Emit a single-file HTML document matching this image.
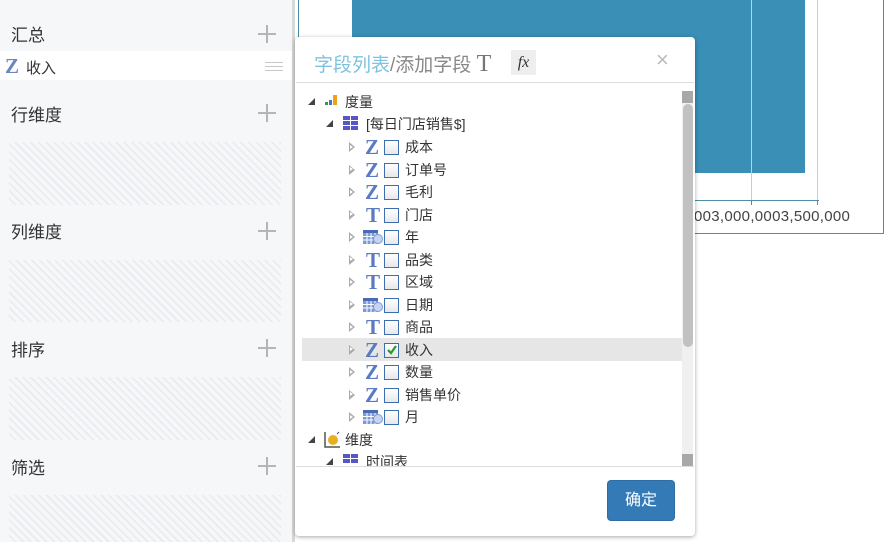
<!DOCTYPE html>
<html><head><meta charset="utf-8"><style>
*{margin:0;padding:0;box-sizing:border-box}
body{width:894px;height:542px;overflow:hidden;background:#fff;font-family:"Liberation Sans","Noto Sans CJK SC",sans-serif;position:relative;color:#333}
.a{position:absolute}
.left{left:0;top:0;width:292px;height:542px;background:#f6f7f9}
.h{font-size:17px;color:#333;left:11px}
.plus{left:258px;width:18px;height:18px}
.plus:before{content:"";position:absolute;left:0;top:8px;width:18px;height:2px;background:#b5b5b5}
.plus:after{content:"";position:absolute;left:8px;top:0;width:2px;height:18px;background:#b5b5b5}
.hatch{left:9px;width:272px;background:repeating-linear-gradient(45deg,#f6f7f9 0 4px,#e9eaee 4px 5.5px)}
.row{position:absolute;height:22px;font-size:14px;line-height:22px;white-space:nowrap}
.tri{position:absolute;top:6px;width:0;height:0;border-left:6px solid #aaa;border-top:5px solid transparent;border-bottom:5px solid transparent}
.tri:after{content:"";position:absolute;left:-5px;top:-2.5px;border-left:3px solid #fff;border-top:2.5px solid transparent;border-bottom:2.5px solid transparent}
.dtri{position:absolute;top:7px;width:0;height:0;border-right:7px solid #444;border-top:7px solid transparent}
.z{position:absolute;font-family:"Liberation Serif",serif;font-weight:bold;font-size:21px;color:#5a7ac4;line-height:22px;top:0}
.cb{position:absolute;top:4px;width:15px;height:15px;border:1.5px solid #3d6fb0;background:linear-gradient(#fff,#e8e8e8)}
</style></head><body>
<div class="a left"></div>
<div class="a h" style="top:21px">汇总</div><div class="a plus" style="top:25px"></div>
<div class="a" style="left:0;top:51px;width:292px;height:29px;background:#fff"></div>
<div class="a" style="left:5px;top:54px;font-family:'Liberation Serif',serif;font-weight:bold;font-size:21px;color:#6b86c0">Z</div>
<div class="a" style="left:26px;top:57px;font-size:15px">收入</div>
<div class="a" style="left:265px;top:62px;width:18px;height:1px;background:#c8c8c8;box-shadow:0 4px 0 #c8c8c8,0 8px 0 #c8c8c8"></div>
<div class="a h" style="top:101px">行维度</div><div class="a plus" style="top:104px"></div>
<div class="a hatch" style="top:142px;height:63px"></div>
<div class="a h" style="top:218px">列维度</div><div class="a plus" style="top:222px"></div>
<div class="a hatch" style="top:260px;height:62px"></div>
<div class="a h" style="top:336px">排序</div><div class="a plus" style="top:339px"></div>
<div class="a hatch" style="top:377px;height:63px"></div>
<div class="a h" style="top:454px">筛选</div><div class="a plus" style="top:457px"></div>
<div class="a hatch" style="top:495px;height:47px"></div>
<div class="a" style="left:292px;top:0;width:3px;height:542px;background:#d8d8d8"></div>

<!-- chart -->
<div class="a" style="left:298px;top:-2px;width:586px;height:236px;border:1px solid #4a90a4"></div>
<div class="a" style="left:352px;top:0;width:453px;height:173px;background:#3a8fb7"></div>
<div class="a" style="left:751px;top:0;width:1px;height:200px;background:#ccc"></div>
<div class="a" style="left:817px;top:0;width:1px;height:200px;background:#ccc"></div>
<div class="a" style="left:690px;top:200px;width:129px;height:1px;background:#4a90a4"></div>
<div class="a" style="left:751px;top:200px;width:1px;height:5px;background:#4a90a4"></div>
<div class="a" style="left:817px;top:200px;width:1px;height:5px;background:#4a90a4"></div>
<div class="a" style="left:694px;top:208px;font-size:15px;letter-spacing:0.3px;color:#444">003,000,0003,500,000</div>

<!-- dialog -->
<div class="a" style="left:295px;top:37px;width:400px;height:499px;background:#fff;border-radius:4px;box-shadow:0 1px 4px rgba(0,0,0,.35)"></div>
<div class="a" style="left:314px;top:50px;font-size:19px;color:#888"><span style="color:#7ec3e0">字段列表</span>/添加字段 <span style="font-family:'Liberation Serif',serif;font-size:24px;color:#777">T</span></div>
<div class="a" style="left:511px;top:50px;width:25px;height:25px;background:#eee;font-family:'Liberation Serif',serif;font-style:italic;font-size:16px;text-align:center;line-height:25px;color:#333">fx</div>
<div class="a" style="left:656px;top:47px;font-size:22px;color:#bbb">×</div>
<div class="a" style="left:296px;top:82px;width:398px;height:1px;background:#ddd"></div>
<div class="a" style="left:296px;top:466px;width:398px;height:1px;background:#ddd"></div>
<div class="a" style="left:607px;top:480px;width:68px;height:41px;background:#337ab7;border-radius:4px;border:1px solid #2e6da4;color:#fff;font-size:16px;text-align:center;line-height:39px">确定</div>

<!-- scrollbar -->
<div class="a" style="left:682px;top:91px;width:11px;height:375px;background:#f0f0f0"></div>
<div class="a" style="left:682px;top:91px;width:11px;height:12px;background:#a8a8a8"></div>
<div class="a" style="left:683px;top:104px;width:10px;height:243px;background:#c1c1c1;border-radius:5px"></div>
<div class="a" style="left:682px;top:454px;width:11px;height:12px;background:#a8a8a8"></div>

<div class="a" style="left:302px;top:338px;width:380px;height:23px;background:#e6e6e6"></div>

<div class="a" style="left:296px;top:91px;width:386px;height:375px;overflow:hidden">
<div class="row" style="top:0;left:0;width:380px"><div class="dtri" style="left:12px"></div>
<svg class="a" style="left:29px;top:4px" width="14" height="12"><rect x="0" y="7" width="3" height="3" fill="#3a9a3a"/><rect x="4" y="5" width="3" height="5" fill="#3a7ad0"/><rect x="8" y="0" width="4" height="10" fill="#f0a020"/></svg>
<span class="a" style="left:49px">度量</span></div>
<div class="row" style="top:22px;left:0;width:380px"><div class="dtri" style="left:30px"></div>
<svg class="a" style="left:47px;top:3px" width="16" height="16"><g fill="#5656c8"><rect x="0" y="0" width="7" height="4"/><rect x="8" y="0" width="7" height="4"/><rect x="0" y="5" width="7" height="4"/><rect x="8" y="5" width="7" height="4"/><rect x="0" y="10" width="7" height="4"/><rect x="8" y="10" width="7" height="4"/></g></svg>
<span class="a" style="left:70px">[每日门店销售$]</span></div>
</div>

<div class="a" style="left:296px;top:91px;width:386px;height:375px;overflow:hidden" id="L"></div>
<script>
var items=[["Z","成本"],["Z","订单号"],["Z","毛利"],["T","门店"],["C","年"],["T","品类"],["T","区域"],["C","日期"],["T","商品"],["Z","收入",1],["Z","数量"],["Z","销售单价"],["C","月"]];
var h="";
items.forEach(function(it,i){
 var t=45+i*22.5;
 var ic=it[0]=="C"?'<svg class="a" style="left:67px;top:3px" width="20" height="16"><rect x="0" y="1" width="15" height="14" fill="#7a9ad8"/><rect x="0" y="1" width="15" height="3" fill="#4a6ab8"/><g stroke="#fff" stroke-width="1"><path d="M0 7.5H15M0 11H15M4 4V15M8 4V15M12 4V15"/></g><circle cx="15" cy="10" r="4.5" fill="#c8d4ee" stroke="#7a9ad8"/></svg>':'<span class="z" style="left:'+(it[0]=="Z"?69:70)+'px">'+it[0]+'</span>';
 var ck=it[2]?'<svg class="a" style="left:90px;top:5px" width="12" height="12"><path d="M2 6L5 9L10 2" stroke="#2a9a2a" stroke-width="2.2" fill="none"/></svg>':'';
 h+='<div class="row" style="top:'+t+'px;left:0;width:380px"><div class="tri" style="left:53px"></div>'+ic+'<div class="cb" style="left:88px"></div>'+ck+'<span class="a" style="left:109px">'+it[1]+'</span></div>';
});
var t2=45+13*22.5;
h+='<div class="row" style="top:'+t2+'px;left:0;width:380px"><div class="dtri" style="left:12px"></div><svg class="a" style="left:27px;top:2px" width="18" height="18"><path d="M2 1V16H17" stroke="#555" stroke-width="1.5" fill="none"/><circle cx="10" cy="9" r="5" fill="#e8b020"/><path d="M14 3L16 1" stroke="#555"/></svg><span class="a" style="left:49px">维度</span></div>';
h+='<div class="row" style="top:'+(t2+22.5)+'px;left:0;width:380px"><div class="dtri" style="left:30px"></div><svg class="a" style="left:47px;top:3px" width="16" height="16"><g fill="#5656c8"><rect x="0" y="0" width="7" height="4"/><rect x="8" y="0" width="7" height="4"/><rect x="0" y="5" width="7" height="4"/><rect x="8" y="5" width="7" height="4"/></g></svg><span class="a" style="left:70px">时间表</span></div>';
document.getElementById("L").innerHTML=h;
</script>
</body></html>
